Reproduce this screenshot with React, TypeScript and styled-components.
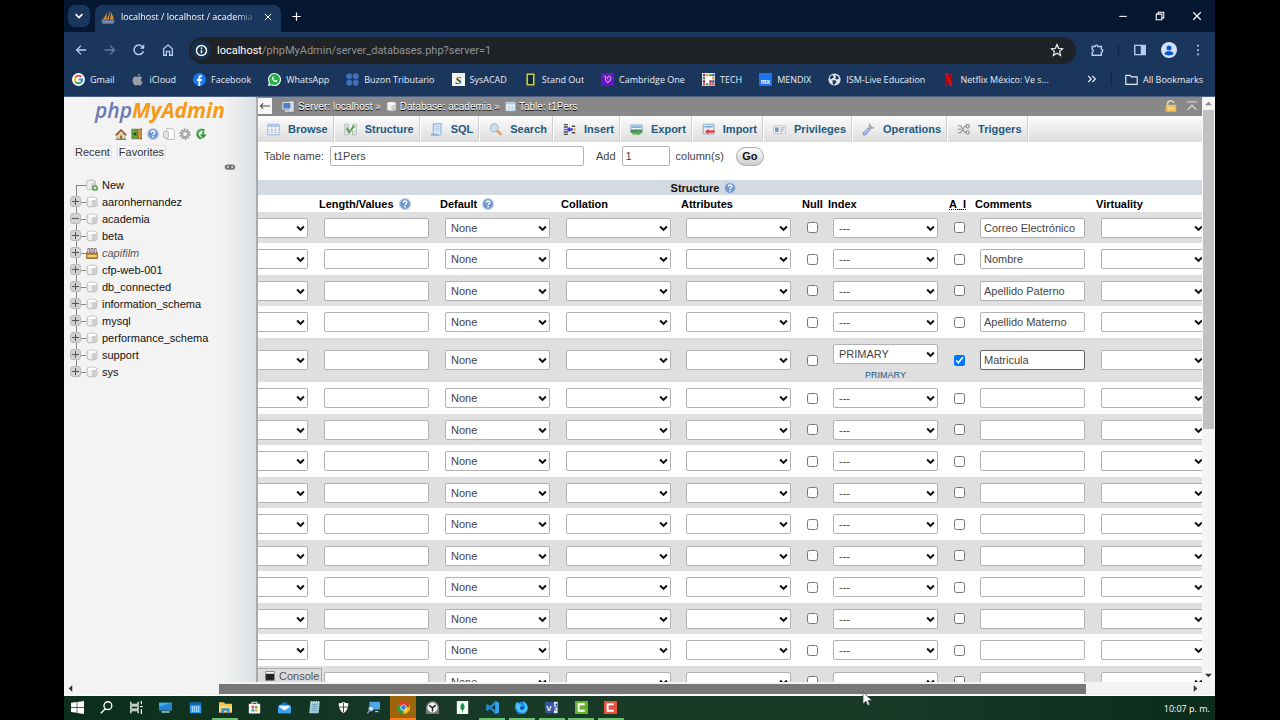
import React from "react";
import styled, { createGlobalStyle, css } from "styled-components";

const ui = '"Open Sans", "Noto Sans", sans-serif';
const sans = '"Liberation Sans", Arial, sans-serif';

const GlobalStyle = createGlobalStyle`
  *, *::before, *::after { box-sizing: border-box; }
  body { margin: 0; background: #000; font-family: ${sans}; }
  button, input, select { font: inherit; margin: 0; }
  button { padding: 0; border: 0; background: none; color: inherit; }
  a { color: inherit; text-decoration: none; }
  svg { display: block; flex: none; }
`;

/* ---------- icons ---------- */

const glyphs = {
  back: <path d="M14 8H3M8 3 3 8l5 5" fill="none" stroke="currentColor" strokeWidth="1.6" />,
  forward: <path d="M2 8h11M8 3l5 5-5 5" fill="none" stroke="currentColor" strokeWidth="1.6" />,
  reload: (
    <>
      <path d="M13 9.5A5.5 5.5 0 1 1 12 4.2" fill="none" stroke="currentColor" strokeWidth="1.7" />
      <path d="M14 1.5v5H9z" fill="currentColor" />
    </>
  ),
  home: <path d="M3 6.6 8 2.3l5 4.3V14H9.8V9.5H6.2V14H3z" fill="none" stroke="currentColor" strokeWidth="1.5" />,
  info: (
    <>
      <circle cx="8" cy="8" r="6.2" fill="none" stroke="currentColor" strokeWidth="1.8" />
      <path d="M7.1 7h1.8v4.5H7.1zM7.1 4.3h1.8V6H7.1z" fill="currentColor" />
    </>
  ),
  star: <path d="m8 1.8 1.9 4.3 4.6.4-3.5 3 1.1 4.6L8 11.6l-4.1 2.5L5 9.5l-3.5-3 4.6-.4z" fill="none" stroke="currentColor" strokeWidth="1.4" />,
  puzzle: <path d="M2.5 4h3.2a1.6 1.6 0 0 1 3.2 0H13v3.3a1.6 1.6 0 0 1 0 3.2V14H2.5v-3.4a1.7 1.7 0 0 0 0-3.3z" fill="none" stroke="currentColor" strokeWidth="1.6" />,
  panel: (
    <>
      <path d="M2 2.7h12v10.6H2z" fill="none" stroke="currentColor" strokeWidth="1.6" />
      <path d="M8.8 3h5v10h-5z" fill="currentColor" />
    </>
  ),
  avatar: (
    <>
      <circle cx="8" cy="8" r="8" fill="#d3e3fd" />
      <circle cx="8" cy="5.9" r="2.5" fill="#0b57d0" />
      <path d="M3.3 11.8C4.2 9.8 6 9.3 8 9.3s3.800.5 4.700 2.500C11.500 13 9.900 13.500 8 13.500s-3.500-.5-4.700-1.700z" fill="#0b57d0" />
    </>
  ),
  dots: <path d="M7 2h2v2H7zM7 7h2v2H7zM7 12h2v2H7z" fill="currentColor" />,
  down: <path d="m3.500 5.500 4.500 4.500 4.500-4.500" fill="none" stroke="currentColor" strokeWidth="2.200" />,
  caret: <path d="m2 4.500 6 6 6-6" fill="none" stroke="currentColor" strokeWidth="3.600" />,
  close: <path d="m3 3 10 10M13 3 3 13" fill="none" stroke="currentColor" strokeWidth="1.600" />,
  plus: <path d="M8 2v12M2 8h12" fill="none" stroke="currentColor" strokeWidth="1.800" />,
  minimize: <path d="M3 8.500h10" fill="none" stroke="currentColor" strokeWidth="1.400" />,
  restore: <path d="M3 5.500h7.500V13H3zM5.500 5.500V3H13v7.500h-2.500" fill="none" stroke="currentColor" strokeWidth="1.400" />,
  chevrons: <path d="m3 4 4 4-4 4M8.500 4l4 4-4 4" fill="none" stroke="currentColor" strokeWidth="1.500" />,
  folder: <path d="M1 3h5.200l1.600 1.800H15V14H1z" fill="none" stroke="currentColor" strokeWidth="1.400" strokeLinejoin="round" />,
  sail: (
    <>
      <path d="M6.500 2v9H1.500C3.800 8.500 5.800 6 6.500 2z" fill="#e08a1c" />
      <path d="M9.500 0c.6 4 .2 8-1 11h-1.800C8.500 8 9.500 4 9.500 0z" fill="#f7a72c" />
      <path d="M11 2c2 3 3.500 6 3.500 9H10c1-3 1.300-6 1-9z" fill="#d98a2a" />
      <path d="M0 12h16l-2 2.500H2z" fill="#8d97b8" />
      <path d="M1 15.300h14" stroke="#6c78af" />
    </>
  ),
  google: (
    <>
      <circle cx="8" cy="8" r="8" fill="#fff" />
      <g fill="none" strokeWidth="2.400">
        <path d="M11.500 4.700A4.700 4.700 0 0 0 4 5.600" stroke="#ea4335" />
        <path d="M4 5.600a4.700 4.700 0 0 0 0 4.800" stroke="#fbbc05" />
        <path d="M4 10.400a4.700 4.700 0 0 0 7.200 1" stroke="#34a853" />
        <path d="M11.200 11.400A4.700 4.700 0 0 0 12.700 8H8.200" stroke="#4285f4" />
      </g>
    </>
  ),
  apple: (
    <path
      d="M11 1c.1 1.500-1.200 3-2.700 3C8.200 2.500 9.500 1.200 11 1zM8.300 5c.8 0 1.600-.7 2.800-.7 1 0 2 .5 2.700 1.400-2.400 1.400-2 4.700.4 5.700-.6 1.800-2 4-3.300 4-.9 0-1.400-.6-2.500-.6s-1.600.6-2.500.6C3.800 15.400 2 11.900 2 9.200c0-3 1.900-4.800 3.800-4.800 1 0 1.900.6 2.500.6z"
      fill="#9a9fa6"
    />
  ),
  facebook: (
    <>
      <circle cx="8" cy="8" r="8" fill="#1877f2" />
      <path d="M6.700 16V9.900H4.800V7.500h1.900V5.800c0-2 1.200-3 2.900-3l1.600.1V5h-1c-1 0-1.200.5-1.200 1.200v1.300h2.100l-.3 2.400H9V16z" fill="#fff" />
    </>
  ),
  whatsapp: (
    <>
      <path d="M8 0a8 8 0 1 1-3.600 15.100L0 16l1-4.200A8 8 0 0 1 8 0z" fill="#fff" />
      <path d="M8 1.300a6.700 6.700 0 1 1-3.400 12.500l-2.800.7.700-2.700A6.700 6.700 0 0 1 8 1.300z" fill="#25b048" />
      <path d="M5.500 4.500c.7-.5 1.200 0 1.600 1.500l-.6.9c.5 1.200 1.400 2 2.600 2.500l.8-.8c1.700.6 2 1 1.500 1.900-2.500 2.800-8.200-3.200-5.900-6z" fill="#fff" />
    </>
  ),
  buzon: (
    <g fill="#3f6fb8">
      <circle cx="4" cy="4" r="3.600" />
      <circle cx="12" cy="4" r="3.600" />
      <circle cx="4" cy="12" r="3.600" />
      <circle cx="12" cy="12" r="3.600" />
    </g>
  ),
  sysacad: (
    <>
      <path d="M0 0h16v16H0z" fill="#f4f6ee" />
      <text x="8" y="13" textAnchor="middle" fontFamily="Liberation Serif, serif" fontStyle="italic" fontWeight="bold" fontSize="14" fill="#3a4636">S</text>
    </>
  ),
  standout: <path d="M4 1.500h8v13H4z" fill="#10233d" stroke="#c6cc3a" strokeWidth="2" />,
  cambridge: (
    <>
      <path d="M0 0h16v16H0z" fill="#6a12c9" />
      <path d="M3.500 4h2v4.500L8 12l4-3.500V5L9.500 3.800 7.500 6l1.600 1.700" fill="none" stroke="#d59bd8" strokeWidth="1.300" />
    </>
  ),
  tech: (
    <>
      <path d="M0 0h16v16H0z" fill="#fff" />
      <path d="M1 1h3v3H1zM9 9h3v3H9zM1 9h3v3H1z" fill="#8c2f4f" />
      <path d="M5 1h3v3H5zM12.500 5h3v3h-3z" fill="#e0a03a" />
      <path d="M9 1h3v3H9zM1 5h3v3H1zM5 12.500h3v3H5z" fill="#5c8f4e" />
      <path d="M12.500 1h3v3h-3zM12.500 9h3v3h-3z" fill="#3c5a9a" />
      <path d="M9 12.500h3v3H9zM1 12.500h3v3H1zM12.500 12.500h3v3h-3z" fill="#c84b3b" />
    </>
  ),
  mendix: (
    <>
      <path d="M0 0h16v16H0z" fill="#1a73f0" />
      <text x="8" y="13" textAnchor="middle" fontFamily="Liberation Sans, sans-serif" fontWeight="bold" fontSize="8" fill="#fff">mx</text>
    </>
  ),
  globe: (
    <>
      <circle cx="8" cy="8" r="7.500" fill="#dfe3ea" />
      <path d="M4 3c2-.5 3 .5 3 1.800 0 1.500-2 1.200-2.400 2.700L2 7.200C2.100 5.500 2.800 4 4 3zM9 2.200l3.500 2L13.500 7l-3 1-2-1.500L10 5zM5.500 9H9l1.500 2-2.500 3.200H6z" fill="#1b365d" />
    </>
  ),
  netflix: (
    <>
      <path d="M4 0h3v16H4zM9.500 0h3v16h-3z" fill="#b00710" />
      <path d="M4 0h3l5.500 16h-3z" fill="#e50914" />
    </>
  ),
  houseColor: (
    <>
      <path d="M3 8h10v7H3z" fill="#e9e2c9" stroke="#8a7d55" strokeWidth=".8" />
      <path d="M6.500 10h3v5h-3z" fill="#a9692d" />
      <path d="M.5 9 8 1.800 15.500 9l-1.200 1L8 4.200 1.700 10z" fill="#b5562a" stroke="#6b4a26" strokeWidth=".6" />
      <path d="M1 15h14" stroke="#4f9a3c" strokeWidth="1.600" />
    </>
  ),
  exit: (
    <>
      <path d="M1 1.500h9v13H1z" fill="#67a03f" stroke="#4a6b35" strokeWidth=".8" />
      <path d="M9 3l5-2.500v15L9 13z" fill="#cf9343" stroke="#7b5220" strokeWidth=".8" />
      <path d="M7 5.500v5L2 8z" fill="#234d1c" />
    </>
  ),
  help: (
    <>
      <circle cx="8" cy="8" r="7.300" fill="#6d97cf" stroke="#c3cfdf" strokeWidth="1.600" />
      <path d="M5.600 6.200C5.700 3.300 10.500 3.400 10.400 6c0 1.600-2.300 1.700-2.300 3.700M8.100 10.800v1.900" fill="none" stroke="#fff" strokeWidth="1.900" />
    </>
  ),
  doc: (
    <>
      <path d="M5 .8h7.500L15.500 4v11.200H5z" fill="#fff" stroke="#a9a9a9" />
      <path d="M.8 5.500c0-1.500 6.400-1.500 6.400 0v7c0 1.500-6.400 1.500-6.400 0z" fill="#e4e4e4" stroke="#9f9f9f" strokeWidth=".9" />
    </>
  ),
  gear: (
    <>
      <circle cx="8" cy="8" r="6.300" fill="none" stroke="#9a9a9a" strokeWidth="2.600" strokeDasharray="2.300 1.600" />
      <circle cx="8" cy="8" r="4" fill="none" stroke="#a8a8a8" strokeWidth="3" />
      <circle cx="8" cy="8" r="2.200" fill="#f5f5f5" />
    </>
  ),
  refreshGreen: (
    <>
      <path d="M12.500 4A5.500 5.500 0 1 0 9 13.500" fill="none" stroke="#3f9c46" strokeWidth="3.200" />
      <path d="M6.500 8.500H15.500L11 13.500z" fill="#2e8436" />
      <path d="M11 5v5" stroke="#3f9c46" strokeWidth="2.600" />
      <path d="M4 7a4.500 4.500 0 0 1 6-3.500" fill="none" stroke="#8fd08a" strokeWidth="1" />
    </>
  ),
  chain: (
    <>
      <rect x="1" y="4.500" width="14" height="7" rx="3.500" fill="#777" />
      <path d="M4 8h3M9 8h3" stroke="#eee" strokeWidth="1.800" />
      <path d="M6 8h4" stroke="#444" strokeWidth="1.200" />
    </>
  ),
  db: (
    <>
      <path d="M1.500 3.500C1.500.8 14.500.8 14.500 3.500v9c0 2.700-13 2.700-13 0z" fill="#efefef" stroke="#a4a4a4" />
      <path d="M8 5.500c3.500 0 5.500-.6 6-1.500v8.500c-.5 1-3 1.500-6 1.500z" fill="#cfcfcf" />
      <ellipse cx="8" cy="3.600" rx="5.800" ry="1.700" fill="#fff" />
    </>
  ),
  dbNew: (
    <>
      <path d="M1 3.500C1 .8 12.500.8 12.500 3.500v9c0 2.200-11.500 2.200-11.500 0z" fill="#efefef" stroke="#a4a4a4" />
      <path d="M7 5.500c3 0 4.800-.6 5.200-1.500v8C11.700 13 9.500 13.500 7 13.500z" fill="#cfcfcf" />
      <circle cx="12" cy="12" r="3.800" fill="#4c9a3c" />
      <path d="M12 10v4M10 12h4" stroke="#fff" strokeWidth="1.500" />
    </>
  ),
  group: (
    <>
      <path d="M1 7h14l1 4-1 4.500H1L0 11z" fill="#c8902c" stroke="#6d4a12" strokeWidth=".8" />
      <path d="M2 12h12" stroke="#ffe29a" strokeWidth="2" />
      <path d="M2.500 2H5v7H2.500zM6.700 2h2.500v7H6.700zM11 2h2.500v7H11z" fill="#f3eef6" stroke="#5a4450" strokeWidth=".9" />
    </>
  ),
  server: (
    <>
      <path d="M8 1h7v14H8z" fill="#d8dde4" stroke="#5c6674" strokeWidth=".8" />
      <path d="M1 3h10v8H1z" fill="#4b7fc4" stroke="#dfe6ee" strokeWidth="1.200" />
      <path d="M3.500 13.500h5" stroke="#dfe6ee" strokeWidth="1.800" />
    </>
  ),
  table: (
    <>
      <path d="M1 1.500h14v13H1z" fill="#fff" stroke="#8fb0d4" strokeWidth="1.200" />
      <path d="M1.500 2h13v3h-13z" fill="#a9c7e6" />
      <path d="M2 8.500h12M2 11.500h12M6 5v9M10.500 5v9" stroke="#a9c1da" strokeWidth="1" />
    </>
  ),
  structure: (
    <>
      <path d="M1 1.500h4.500v13H1zM10.500 1.500H15v13h-4.500z" fill="#f2f2f2" stroke="#9db0a4" />
      <path d="M2 5h2.500M2 8h2.500M2 11h2.500M11.500 5H14M11.500 11H14" stroke="#8aa" />
      <path d="M3.500 6.500 6.500 11.500 12.500 3.500" fill="none" stroke="#4a9d44" strokeWidth="2" />
    </>
  ),
  sql: (
    <>
      <path d="M4 1h10.500c-1.500 1-1 3-1 5v7c0 1.500-1 2-2 2H2c1.500-1 2-2 2-4z" fill="#d9eaf8" stroke="#6f9cc8" />
      <path d="M6 4.500h5.500M6 7h5.500M6 9.500h5.500" stroke="#9dbfe0" />
      <path d="M1 13h8.500c0 1.300.8 2 1.800 2H2.500C1.500 15 1 14 1 13z" fill="#8fb5dc" />
    </>
  ),
  search: (
    <>
      <circle cx="6.500" cy="6" r="4.800" fill="#c9dff3" stroke="#a9b9c8" strokeWidth="1.500" />
      <path d="m10.200 9.800 4 4" stroke="#e0a060" strokeWidth="3" strokeLinecap="round" />
    </>
  ),
  insert: (
    <>
      <path d="M1 2h5M1 5h5M1 11h5M1 14h5" stroke="#454545" strokeWidth="1.800" />
      <path d="M8.500 4.500v2H12v3H8.500v2L4 8z" fill="#3e3bd0" />
      <path d="M1 8h4" stroke="#6a5ae0" strokeWidth="1.800" />
      <path d="M11 4h4M11 12h4" stroke="#454545" strokeWidth="1.800" />
      <path d="M13 8h2.500" stroke="#e0b53e" strokeWidth="3" />
    </>
  ),
  exportIcon: (
    <>
      <path d="M1 2.500h14v9H1z" fill="#e7f0f7" stroke="#7e9bb5" />
      <path d="M2 5h12" stroke="#6fa8d8" strokeWidth="2" />
      <path d="M1 8h14v4H1z" fill="#4f8f5a" />
      <path d="M3 11h7V9.500l4 3-4 3V14H3z" fill="#4fb04a" />
    </>
  ),
  importIcon: (
    <>
      <path d="M1.500 1.500h13v12h-13z" fill="#e7f0f7" stroke="#7e9bb5" />
      <path d="M3 4.500h10" stroke="#6fa8d8" strokeWidth="2" />
      <path d="M15.500 9H8V7l-4.500 3.500L8 14v-2h7.500z" fill="#d6434a" />
    </>
  ),
  privileges: (
    <>
      <path d="M.8 3.500h14.400v9.500H.8z" fill="#f2f4f6" stroke="#b3bcc6" />
      <path d="M2.500 5.500H7v5.500H2.500z" fill="#7d97b4" />
      <path d="M9 6h4.500M9 8.300h4.500M9 10.500h3" stroke="#8c99a8" />
    </>
  ),
  wrench: (
    <>
      <path d="M8.500 7.500 12 4" stroke="#b4b6bc" strokeWidth="2.800" />
      <path d="M10.500 1.200c-1.500 1-1.500 3-.5 4s3 1.200 4.500-.2" fill="none" stroke="#a7a9b0" strokeWidth="2.200" />
      <path d="M3 13 8 8" stroke="#7f9fdc" strokeWidth="4.600" strokeLinecap="round" />
      <path d="M3 12.500 7.500 8" stroke="#bcd0f5" strokeWidth="1.600" strokeLinecap="round" />
    </>
  ),
  triggers: (
    <g fill="none" stroke="#8e8e8e" strokeWidth="1.300">
      <path d="M1 3.500h3.500l5 8H12M1 12h3.500l5-8H12M1 7.700h4" />
      <rect x="11" y="2" width="4" height="4" rx="1.500" />
      <rect x="11" y="9.500" width="4" height="4" rx="1.500" />
    </g>
  ),
  lock: (
    <>
      <path d="M3.500 8V4.500C3.500.3 11.500.3 11.500 4" fill="none" stroke="#e2dccb" strokeWidth="1.800" />
      <path d="M1.500 7h13v8h-13z" fill="#efbd4f" stroke="#f5d27a" strokeWidth=".8" />
      <path d="M5 9v4M8 9v4M11 9v4" stroke="#fff0c0" strokeWidth="1.200" />
    </>
  ),
  top: <path d="M1.500 2.500h13M2.500 13 8 7l5.500 6" fill="none" stroke="#d2d2d2" strokeWidth="1.900" />,
  arrowLeft: <path d="M14.500 8H2M5.500 4.500 2 8l3.500 3.500" fill="none" stroke="#444" strokeWidth="1.400" />,
  consoleIcon: (
    <>
      <path d="M1 1h14v14H1z" fill="#222" stroke="#777" />
      <path d="M1.500 1.500h13v3h-13z" fill="#f4f4f4" />
    </>
  ),
  windows: <path d="M0 2.300 7 1.300v6.200H0zM7.800 1.200 16 0v7.500H7.800zM0 8.300h7v6.200l-7-1zM7.800 8.300H16V16l-8.200-1.200z" fill="#fff" />,
  find: <path d="M6.800 9.300 1 15M14.500 5.700a4.800 4.800 0 1 1-9.600 0 4.800 4.800 0 0 1 9.600 0z" fill="none" stroke="#fff" strokeWidth="1.700" />,
  taskView: <path d="M1 1v3h9V1M1 15v-3h9v3M1 6h9v4H1zM14 0v4M14 10v6M12.500 7h3" fill="none" stroke="#fff" strokeWidth="1.500" />,
  monitor: (
    <>
      <path d="M0 2h16v9.500H0z" fill="#45aef2" />
      <path d="M0 7 16 2v9.500H0z" fill="#1f83d6" />
      <path d="M3 13.500h10" stroke="#cfe3f3" strokeWidth="1.600" />
    </>
  ),
  calendar: (
    <>
      <path d="M1 2h14v13H1z" fill="#2f9bea" />
      <path d="M1 2h14v3H1z" fill="#0f62b4" />
      <path d="M3.500 7.500h9M3.500 10h9M3.500 12.500h9" stroke="#e8f5ff" strokeWidth="1.400" strokeDasharray="1.500 1" />
    </>
  ),
  explorer: (
    <>
      <path d="M0 1.500h6l1.500 2H16V14H0z" fill="#f3c44b" />
      <path d="M0 6h16v8H0z" fill="#ffd972" />
      <path d="M3 15V9h10v6h-3v-3H6v3z" fill="#3c8fd0" />
    </>
  ),
  store: (
    <>
      <path d="M5 4V1.500h6V4" fill="none" stroke="#dfe8e6" strokeWidth="1.300" />
      <path d="M1 3.500h14V14q0 1.500-1.500 1.500h-11Q1 15.500 1 14z" fill="#f5f5f5" />
      <path d="M4.500 6h3v3h-3z" fill="#e8532c" />
      <path d="M8.500 6h3v3h-3z" fill="#6cb33e" />
      <path d="M4.500 10h3v3h-3z" fill="#2a9be0" />
      <path d="M8.500 10h3v3h-3z" fill="#f5b51e" />
    </>
  ),
  mail: (
    <>
      <path d="m0 6 8-5 8 5v9H0z" fill="#1272c4" />
      <path d="M1.500 5.500h13V9L8 12 1.500 9z" fill="#e9f4fc" />
      <path d="m0 6.500 8 5.500 8-5.500V15H0z" fill="#3aa4ee" />
    </>
  ),
  notes: (
    <>
      <path d="M3 1h11.500L13 15H1.500z" fill="#a5cfe0" />
      <path d="M5 4h7M4.800 6.500h7M4.500 9h7M4.200 11.500h7" stroke="#5d8fa6" strokeWidth=".9" />
      <path d="M3.500.8h11" stroke="#eef" strokeWidth="1.800" strokeDasharray="1.200 1" />
    </>
  ),
  shield: (
    <>
      <path d="M8 1c2 1.300 4 1.800 6 1.800 0 6-2 10-6 12.200C4 12.800 2 8.800 2 2.800 4 2.800 6 2.300 8 1z" fill="#fff" />
      <path d="M8 2v12M2.500 7.500h11" stroke="#12321f" strokeWidth="1" />
    </>
  ),
  remote: (
    <>
      <path d="M3 1h13v9.500H3z" fill="#4aa7ea" />
      <path d="M10 13h4" stroke="#b8d4e8" strokeWidth="1.500" />
      <circle cx="5" cy="9.500" r="3" fill="#cfe6f6" stroke="#5b88a8" />
      <path d="m3 12-2.500 3" stroke="#9fb6c6" strokeWidth="1.600" />
    </>
  ),
  chrome: (
    <>
      <path d="M8 8 1.100 4A8 8 0 0 1 14.900 4z" fill="#e33b2e" />
      <path d="M8 8 1.100 4A8 8 0 0 0 8 16z" fill="#2c9f4b" />
      <path d="M8 8h6.900L14.900 4A8 8 0 0 1 8 16z" fill="#fbc116" />
      <circle cx="8" cy="8" r="3.800" fill="#fff" />
      <circle cx="8" cy="8" r="3" fill="#3d7de8" />
    </>
  ),
  clock: (
    <>
      <path d="M0 8a8 8 0 0 1 16 0v8H0z" fill="#777a7a" />
      <circle cx="8" cy="8" r="6.300" fill="#f3f3f3" />
      <path d="m4 5.500 4 2.800 4-3.300M8 8v5" fill="none" stroke="#222" strokeWidth="1.800" />
    </>
  ),
  mongo: (
    <>
      <path d="M1 0h14v16H1z" fill="#f5fbf5" />
      <path d="M8 2c4 4 3 7.500 0 10C5 9.500 4 6 8 2zM7.600 11h.8v3h-.8z" fill="#19934a" />
    </>
  ),
  vscode: (
    <>
      <path d="m11.500 0 4.500 2v12l-4.500 2L5 9.800 1.800 12.300.2 11.400V4.600l1.600-.9L5 6.200z" fill="#2489ca" />
      <path d="M11.500 4.500v7L7 8z" fill="#143622" />
      <path d="M11.500 0 16 2v12l-4.500 2z" fill="#35a4ee" />
    </>
  ),
  firefox: (
    <>
      <circle cx="8" cy="8.500" r="7.500" fill="#1f86e6" />
      <path d="M1.500 1.500C3 2 4.500 2.500 5.500 4.200L9 5c0 2-2.800 1.500-3 4 .5 3 5 3 6 0C13 6 11 3 9.500 0 14 2 16 6 15.500 9a7.500 7.500 0 0 1-15-.5C.5 6 .8 3.500 1.500 1.500z" fill="#45c5f2" />
      <path d="M1 7c.5 5 5 8 9 7.500 3-.5 5-3 5.400-5.500-.4 4-3.400 7-7.400 7S.5 13 .5 8.500z" fill="#1f6fe0" />
      <circle cx="8.500" cy="8.500" r="2.200" fill="#1350b8" />
    </>
  ),
  visio: (
    <>
      <path d="M0 1h11v14H0z" fill="#3955a3" />
      <path d="M11 1h4.500v14H11z" fill="#e6ecfa" />
      <text x="5" y="12" textAnchor="middle" fontFamily="Liberation Sans, sans-serif" fontWeight="bold" fontSize="10" fill="#fff">V</text>
      <path d="M12 4h2.500v3.500H12V11h2" fill="none" stroke="#3955a3" strokeWidth="1.300" />
    </>
  ),
  camtasia: (
    <>
      <path d="M0 0h16v16H0z" fill="#69b42d" />
      <path d="M12 4H4.500v8H12" fill="none" stroke="#fff" strokeWidth="2.400" />
    </>
  ),
  recorder: (
    <>
      <path d="M0 0h16v16H0z" fill="#e8533f" />
      <path d="M12 4H4.500v8H12" fill="none" stroke="#fff" strokeWidth="2.400" />
    </>
  ),
};

type GlyphName = keyof typeof glyphs;

function Icon({ name, size = 12 }: { name: GlyphName; size?: number }) {
  return (
    <svg width={size} height={size} viewBox="0 0 16 16" aria-hidden="true">
      {glyphs[name]}
    </svg>
  );
}

/* ---------- browser frame ---------- */

const Desktop = styled.div`
  position: relative;
  display: flex;
  flex-direction: column;
  height: 100vh;
  margin: 0 65px 0 64px;
  overflow: hidden;
`;

const TabStrip = styled.div`
  display: flex;
  align-items: flex-end;
  height: 32px;
  flex: none;
  background: #061831;
  color: #fff;
  font-family: ${ui};
`;

const TabSearch = styled.button`
  display: grid;
  place-items: center;
  width: 22px;
  height: 22px;
  margin: 0 5px 5px 4px;
  border-radius: 7px;
  background: #1b365d;
`;

const BrowserTab = styled.div`
  display: flex;
  align-items: center;
  width: 186px;
  height: 27px;
  padding: 0 6px 4px 6px;
  border-radius: 8px 8px 0 0;
  background: #1b365d;
`;

const TabTitle = styled.span`
  flex: 1;
  margin: 0 4px 0 6px;
  white-space: nowrap;
  font-size: 9px;
  font-weight: 500;
  mask-image: linear-gradient(to right, #000 84%, transparent);
`;

const StripButton = styled.button`
  display: grid;
  place-items: center;
  width: 14px;
  height: 14px;
`;

const NewTab = styled(StripButton)`
  margin: 0 auto 9px 8px;
`;

const WindowControls = styled.div`
  display: flex;
  gap: 23px;
  padding: 0 11px 9px 0;
`;

const Toolbar = styled.div`
  display: flex;
  align-items: center;
  height: 36px;
  flex: none;
  padding: 0 10px;
  background: #1b365d;
  color: #b5cdf2;
`;

const ToolButtons = styled.div<{ $gap: number }>`
  display: flex;
  align-items: center;
  gap: ${(p) => p.$gap}px;
`;

const ToolButton = styled.button<{ $dim?: boolean }>`
  display: grid;
  place-items: center;
  opacity: ${(p) => (p.$dim ? 0.45 : 1)};
`;

const AddressBar = styled.div`
  display: flex;
  flex: 1;
  align-items: center;
  height: 27px;
  margin: 0 14px;
  padding: 0 12px 0 2px;
  border-radius: 14px;
  background: #1f2226;
  color: #e3e6ea;
`;

const SiteInfo = styled.button`
  display: grid;
  place-items: center;
  width: 20px;
  height: 20px;
  margin-right: 6px;
  border-radius: 50%;
  background: #16304f;
  color: #fff;
`;

const Address = styled.span`
  flex: 1;
  font-family: Roboto, sans-serif;
  font-size: 11px;
  color: #8f9399;
  b { font-weight: 400; color: #fff; }
`;

const Divider = styled.span`
  width: 1px;
  height: 13px;
  background: #0e2444;
`;

const Bookmarks = styled.nav`
  display: flex;
  align-items: center;
  gap: 17px;
  height: 28px;
  flex: none;
  padding: 0 12px 6px 8px;
  background: #1b365d;
  color: #e8eef8;
  font-family: ${ui};
  font-size: 9px;
  font-weight: 500;
  white-space: nowrap;
`;

const Bookmark = styled.a`
  display: flex;
  align-items: center;
  gap: 5px;
`;

const BookmarkTail = styled.div`
  display: flex;
  align-items: center;
  gap: 13px;
  margin-left: auto;
`;

/* ---------- page ---------- */

const Page = styled.div`
  display: flex;
  flex: 1;
  min-height: 0;
  border-top: 1px solid #4a5f84;
`;

const Sidebar = styled.aside`
  flex: none;
  width: 194px;
  border-right: 2px solid #a9acae;
  background: linear-gradient(to right, #f3f3f3 82%, #dce1e4);
  color: #111;
  font-size: 11px;
`;

const Logo = styled.h1`
  display: flex;
  justify-content: center;
  height: 28px;
  margin: 0;
  font-family: ${ui};
  font-size: 21px;
  line-height: 27px;
  font-weight: 700;
  font-style: italic;
  color: #f49b18;
  span { font-weight: 600; color: #6c78af; }
`;

const SidebarIcons = styled.div`
  display: flex;
  justify-content: center;
  gap: 4px;
  height: 19px;
  padding: 3px 0 0 2px;
`;

const SidebarTabs = styled.div`
  display: flex;
  gap: 5px;
  padding: 1px 0 0 9px;
`;

const SidebarTab = styled.button`
  height: 14px;
  padding: 0 1px;
  border: 1px solid #e2e4e8;
  border-radius: 2px;
  line-height: 12px;
  color: #333;
`;

const LinkRow = styled.div`
  display: flex;
  justify-content: flex-end;
  padding: 2px 20px 3px 0;
`;

const Tree = styled.ul`
  margin: 0;
  padding: 0 0 0 6px;
  list-style: none;
`;

const TreeRow = styled.li<{ $first?: boolean; $last?: boolean }>`
  position: relative;
  display: flex;
  align-items: center;
  height: 17px;
  &::before {
    content: "";
    position: absolute;
    left: 6px;
    top: ${(p) => (p.$first ? "9px" : "0")};
    bottom: ${(p) => (p.$last ? "8px" : "0")};
    border-left: 1px solid #888;
  }
  &::after {
    content: "";
    position: absolute;
    left: 6px;
    top: 9px;
    width: 10px;
    border-top: 1px solid #888;
  }
`;

const Expander = styled.button<{ $open?: boolean }>`
  position: relative;
  z-index: 1;
  width: 11px;
  height: 11px;
  border-radius: 3px;
  border: 1px solid #bbb;
  background:
    linear-gradient(#555, #555) center / 7px 1px no-repeat,
    linear-gradient(#555, #555) center / 1px ${(p) => (p.$open ? "1px" : "7px")} no-repeat,
    #d2d2d2;
`;

const ExpanderGap = styled.span`
  width: 11px;
`;

const TreeLink = styled.a<{ $group?: boolean }>`
  display: flex;
  align-items: center;
  gap: 4px;
  margin-left: 5px;
  ${(p) => p.$group && css`font-style: italic; color: #555;`}
`;

const Main = styled.main`
  position: relative;
  flex: 1;
  min-width: 0;
  overflow: hidden;
  background: #fff;
  color: #444;
  font-size: 11px;
`;

const Crumbs = styled.div`
  display: flex;
  align-items: center;
  height: 19px;
  padding: 0 4px 1px 0;
  background: #888;
  color: #fff;
  font-size: 10px;
  text-shadow: 0 1px 0 #000;
`;

const CollapseNav = styled.button`
  display: grid;
  place-items: center;
  width: 14px;
  height: 16px;
  margin-right: 10px;
  background: #f6f6f6;
`;

const Crumb = styled.a`
  display: flex;
  align-items: center;
  gap: 3px;
  margin-right: 5px;
`;

const CrumbTools = styled.div`
  display: flex;
  gap: 9px;
  margin-left: auto;
`;

const Menu = styled.nav`
  display: flex;
  height: 26px;
  background: linear-gradient(#fdfdfd, #dcdcdc);
`;

const MenuTab = styled.a`
  display: flex;
  align-items: center;
  gap: 8px;
  padding: 0 6px 0 9px;
  border-right: 1px solid #fff;
  box-shadow: inset -1px 0 0 #d0d0d0;
  color: #235a81;
  font-weight: 700;
  white-space: nowrap;
`;

const field = css`
  height: 20px;
  border: 1px solid #b2b2b2;
  border-radius: 2px;
  background: #fff;
  color: #444;
  font-size: 11px;
`;

const TableForm = styled.form`
  display: flex;
  align-items: center;
  height: 38px;
  padding: 0 0 10px 6px;
`;

const TextField = styled.input<{ $width?: number; $active?: boolean }>`
  ${field}
  display: block;
  width: ${(p) => p.$width ?? 105}px;
  padding: 0 3px;
  border-color: ${(p) => (p.$active ? "#666" : "#b2b2b2")};
`;

const FormLabel = styled.label`
  display: flex;
  align-items: center;
  gap: 6px;
  margin-right: 12px;
  white-space: nowrap;
`;

const GoButton = styled.button`
  width: 28px;
  height: 19px;
  border: 1px solid #aaa;
  border-radius: 10px;
  background: linear-gradient(#fff, #ccc);
  color: #111;
  font-weight: 700;
`;

const Grid = styled.table`
  width: 100%;
  min-width: 959px;
  table-layout: fixed;
  border-collapse: collapse;
  td, th { padding: 0; text-align: left; white-space: nowrap; }
`;

const Caption = styled.th`
  height: 15px;
  background: #d3dae1;
  color: #111;
  && { padding-right: 68px; text-align: center; }
`;

const HeadLabel = styled.span`
  display: inline-flex;
  align-items: center;
  gap: 5px;
  vertical-align: top;
`;

const Heads = styled.tr`
  height: 17px;
  background: #fff;
  color: #000;
`;

const Row = styled.tr<{ $tall?: boolean }>`
  height: ${(p) => (p.$tall ? 44 : 31)}px;
  background: #dfdfdf;
  &:nth-child(even) { height: 32px; background: #fff; }
`;

const SelectBox = styled.div<{ $cut?: boolean }>`
  position: relative;
  width: ${(p) => (p.$cut ? 50 : 105)}px;
  color: #111;
  svg {
    position: absolute;
    right: 3px;
    top: 6px;
    pointer-events: none;
  }
  select {
    ${field}
    display: block;
    width: 100%;
    padding: 0 16px 0 5px;
    appearance: none;
    ${(p) => p.$cut && css`border-left: 0; border-radius: 0 2px 2px 0;`}
  }
`;

const Pad = styled.div<{ $low?: boolean }>`
  padding: ${(p) => (p.$low ? "4px" : "0")} 0 0 5px;
`;

const Tick = styled.input`
  display: block;
  width: 11px;
  height: 11px;
  margin: 0 0 0 5px;
`;

const IndexNote = styled.a`
  display: block;
  width: 105px;
  padding-top: 6px;
  text-align: center;
  font-size: 9px;
  line-height: 10px;
  color: #235a81;
`;

const Console = styled.button`
  position: absolute;
  left: 0;
  bottom: 0;
  display: flex;
  align-items: center;
  gap: 4px;
  height: 14px;
  padding: 0 2px 0 7px;
  border: 1px solid #aaa;
  border-width: 1px 1px 0 0;
  background: #dcdcdc;
  color: #555;
`;

/* ---------- scroll bars ---------- */

const VTrack = styled.div`
  display: flex;
  flex-direction: column;
  align-items: center;
  flex: none;
  width: 13px;
  background: #f5f5f5;
`;

const VThumb = styled.div`
  width: 11px;
  flex: 318;
  background: #c1c1c1;
`;

const HTrack = styled.div`
  display: flex;
  align-items: center;
  flex: none;
  height: 14px;
  padding-right: 13px;
  border-bottom: 1px solid #fff;
  background: #f3f3f3;
`;

const HThumb = styled.div`
  height: 10px;
  flex: 867;
  background: #777;
`;

const TrackSpace = styled.div<{ $grow: number }>`
  flex: ${(p) => p.$grow};
`;

const ScrollButton = styled.button`
  display: grid;
  place-items: center;
  width: 13px;
  height: 13px;
`;

function Triangle({ turn }: { turn: number }) {
  return (
    <svg width="7" height="7" viewBox="0 0 8 8" aria-hidden="true">
      <path d="M0 6h8L4 2z" fill={turn ? "#333" : "#888"} transform={`rotate(${turn} 4 4)`} />
    </svg>
  );
}

/* ---------- task bar ---------- */

const TaskBar = styled.footer`
  display: flex;
  align-items: center;
  justify-content: space-between;
  flex: none;
  height: 24px;
  padding-right: 5px;
  background: linear-gradient(to right, #0b2f1c, #1a3a28 40%, #1a3a28 70%, #0b2c1b);
  color: #fff;
  font-family: ${ui};
  font-size: 9px;
`;

const Tasks = styled.div`
  display: flex;
  justify-content: space-between;
  flex: 0 1 560px;
`;

const Task = styled.button<{ $open?: boolean; $active?: boolean }>`
  display: grid;
  place-items: center;
  width: 26px;
  height: 24px;
  border-bottom: 2px solid transparent;
  ${(p) => p.$open && css`border-image: linear-gradient(to right, transparent 8%, #6cc070 8%, #6cc070 92%, transparent 92%) 2;`}
  ${(p) => p.$active && css`background: #9c650c; border-bottom-color: #ff7a1a;`}
`;

const Cursor = styled.svg`
  position: absolute;
  left: 798px;
  top: 691px;
`;

/* ---------- data ---------- */

const bookmarks: [GlyphName, string][] = [
  ["google", "Gmail"],
  ["apple", "iCloud"],
  ["facebook", "Facebook"],
  ["whatsapp", "WhatsApp"],
  ["buzon", "Buzon Tributario"],
  ["sysacad", "SysACAD"],
  ["standout", "Stand Out"],
  ["cambridge", "Cambridge One"],
  ["tech", "TECH"],
  ["mendix", "MENDIX"],
  ["globe", "ISM-Live Education"],
  ["netflix", "Netflix México: Ve s..."],
];

const databases = [
  "New", "aaronhernandez", "academia", "beta", "capifilm", "cfp-web-001", "db_connected",
  "information_schema", "mysql", "performance_schema", "support", "sys",
];

const menu: [GlyphName, string][] = [
  ["table", "Browse"],
  ["structure", "Structure"],
  ["sql", "SQL"],
  ["search", "Search"],
  ["insert", "Insert"],
  ["exportIcon", "Export"],
  ["importIcon", "Import"],
  ["privileges", "Privileges"],
  ["wrench", "Operations"],
  ["triggers", "Triggers"],
];

const comments = ["Correo Electrónico", "Nombre", "Apellido Paterno", "Apellido Materno", "Matricula"];
const rows = Array.from({ length: 15 }, (_, i) => ({ comment: comments[i] ?? "", primary: i === 4 }));
const columns = [61, 121, 121, 120, 121, 26, 121, 26, 121, 121];

const tasks: { icon: GlyphName; open?: boolean; active?: boolean }[] = [
  { icon: "windows" }, { icon: "find" }, { icon: "taskView" }, { icon: "monitor" }, { icon: "calendar" },
  { icon: "explorer", open: true }, { icon: "store" }, { icon: "mail" }, { icon: "notes" }, { icon: "shield" },
  { icon: "remote" }, { icon: "chrome", active: true }, { icon: "clock" }, { icon: "mongo" },
  { icon: "vscode", open: true }, { icon: "firefox", open: true }, { icon: "visio", open: true },
  { icon: "camtasia", open: true }, { icon: "recorder", open: true },
];

const sidebarIcons: GlyphName[] = ["houseColor", "exit", "help", "doc", "gear", "refreshGreen"];

function Choice({ label, options = [""], cut }: { label: string; options?: string[]; cut?: boolean }) {
  return (
    <SelectBox $cut={cut}>
      <select aria-label={label}>
        {options.map((o) => <option key={o}>{o}</option>)}
      </select>
      <Icon name="caret" size={9} />
    </SelectBox>
  );
}

function ColumnRow({ comment, primary }: { comment: string; primary: boolean }) {
  return (
    <Row $tall={primary}>
      <td><Choice label="Type" cut /></td>
      <td><Pad><TextField aria-label="Length/Values" /></Pad></td>
      <td><Pad><Choice label="Default" options={["None"]} /></Pad></td>
      <td><Pad><Choice label="Collation" /></Pad></td>
      <td><Pad><Choice label="Attributes" /></Pad></td>
      <td><Tick type="checkbox" aria-label="Null" /></td>
      <td>
        <Pad $low={primary}>
          <Choice label="Index" options={[primary ? "PRIMARY" : "---"]} />
          {primary && <IndexNote href="#">PRIMARY</IndexNote>}
        </Pad>
      </td>
      <td><Tick type="checkbox" aria-label="A_I" defaultChecked={primary} /></td>
      <td><Pad><TextField aria-label="Comments" defaultValue={comment} $active={primary} /></Pad></td>
      <td><Pad><Choice label="Virtuality" /></Pad></td>
    </Row>
  );
}

const AutoInc = styled.abbr`
  text-decoration: underline dotted;
`;

export default function App() {
  return (
    <>
      <GlobalStyle />
      <Desktop>
        <TabStrip>
          <TabSearch aria-label="Search tabs"><Icon name="down" size={12} /></TabSearch>
          <BrowserTab>
            <Icon name="sail" size={14} />
            <TabTitle>localhost / localhost / academia</TabTitle>
            <StripButton aria-label="Close tab"><Icon name="close" size={10} /></StripButton>
          </BrowserTab>
          <NewTab aria-label="New tab"><Icon name="plus" size={11} /></NewTab>
          <WindowControls>
            <StripButton aria-label="Minimize"><Icon name="minimize" size={12} /></StripButton>
            <StripButton aria-label="Restore"><Icon name="restore" size={12} /></StripButton>
            <StripButton aria-label="Close"><Icon name="close" size={12} /></StripButton>
          </WindowControls>
        </TabStrip>

        <Toolbar>
          <ToolButtons $gap={15}>
            <ToolButton aria-label="Back"><Icon name="back" size={14} /></ToolButton>
            <ToolButton aria-label="Forward" $dim><Icon name="forward" size={14} /></ToolButton>
            <ToolButton aria-label="Reload"><Icon name="reload" size={14} /></ToolButton>
            <ToolButton aria-label="Home"><Icon name="home" size={14} /></ToolButton>
          </ToolButtons>
          <AddressBar>
            <SiteInfo aria-label="Site information"><Icon name="info" size={13} /></SiteInfo>
            <Address><b>localhost</b>/phpMyAdmin/server_databases.php?server=1</Address>
            <ToolButton aria-label="Bookmark this page"><Icon name="star" size={14} /></ToolButton>
          </AddressBar>
          <ToolButtons $gap={14}>
            <ToolButton aria-label="Extensions"><Icon name="puzzle" size={14} /></ToolButton>
            <Divider />
            <ToolButton aria-label="Side panel"><Icon name="panel" size={14} /></ToolButton>
            <ToolButton aria-label="Profile"><Icon name="avatar" size={16} /></ToolButton>
            <ToolButton aria-label="Menu"><Icon name="dots" size={14} /></ToolButton>
          </ToolButtons>
        </Toolbar>

        <Bookmarks>
          {bookmarks.map(([icon, label]) => (
            <Bookmark key={label} href="#"><Icon name={icon} size={13} />{label}</Bookmark>
          ))}
          <BookmarkTail>
            <ToolButton aria-label="More bookmarks"><Icon name="chevrons" size={12} /></ToolButton>
            <Divider />
            <Bookmark href="#"><Icon name="folder" size={13} />All Bookmarks</Bookmark>
          </BookmarkTail>
        </Bookmarks>

        <Page>
          <Sidebar>
            <Logo><span>php</span>MyAdmin</Logo>
            <SidebarIcons>
              {sidebarIcons.map((n) => <Icon key={n} name={n} />)}
            </SidebarIcons>
            <SidebarTabs>
              <SidebarTab>Recent</SidebarTab>
              <SidebarTab>Favorites</SidebarTab>
            </SidebarTabs>
            <LinkRow><Icon name="chain" /></LinkRow>
            <Tree>
              {databases.map((name, i) => (
                <TreeRow key={name} $first={i === 0} $last={i === databases.length - 1}>
                  {i === 0 ? <ExpanderGap /> : <Expander aria-label={`Expand ${name}`} $open={name === "academia"} />}
                  <TreeLink href="#" $group={name === "capifilm"}>
                    <Icon name={i === 0 ? "dbNew" : name === "capifilm" ? "group" : "db"} />
                    {name}
                  </TreeLink>
                </TreeRow>
              ))}
            </Tree>
          </Sidebar>

          <Main>
            <Crumbs>
              <CollapseNav aria-label="Hide navigation"><Icon name="arrowLeft" /></CollapseNav>
              <Crumb href="#"><Icon name="server" size={13} />Server: localhost »</Crumb>
              <Crumb href="#"><Icon name="db" size={11} />Database: academia »</Crumb>
              <Crumb href="#"><Icon name="table" size={11} />Table: t1Pers</Crumb>
              <CrumbTools><Icon name="lock" /><Icon name="top" /></CrumbTools>
            </Crumbs>
            <Menu>
              {menu.map(([icon, label]) => (
                <MenuTab key={label} href="#"><Icon name={icon} size={13} />{label}</MenuTab>
              ))}
            </Menu>
            <TableForm>
              <FormLabel>Table name: <TextField $width={254} defaultValue="t1Pers" /></FormLabel>
              <FormLabel>Add <TextField $width={48} defaultValue="1" /> column(s)</FormLabel>
              <GoButton type="button">Go</GoButton>
            </TableForm>
            <Grid>
              <colgroup>
                {columns.map((w, i) => <col key={i} width={w} />)}
              </colgroup>
              <thead>
                <tr><Caption colSpan={10}><HeadLabel>Structure <Icon name="help" /></HeadLabel></Caption></tr>
                <Heads>
                  <th />
                  <th><HeadLabel>Length/Values <Icon name="help" /></HeadLabel></th>
                  <th><HeadLabel>Default <Icon name="help" /></HeadLabel></th>
                  <th>Collation</th>
                  <th>Attributes</th>
                  <th>Null</th>
                  <th>Index</th>
                  <th><AutoInc title="AUTO_INCREMENT">A_I</AutoInc></th>
                  <th>Comments</th>
                  <th>Virtuality</th>
                </Heads>
              </thead>
              <tbody>
                {rows.map((r, i) => <ColumnRow key={i} {...r} />)}
              </tbody>
            </Grid>
            <Console><Icon name="consoleIcon" size={10} />Console</Console>
          </Main>

          <VTrack>
            <ScrollButton aria-label="Scroll up"><Triangle turn={0} /></ScrollButton>
            <VThumb />
            <TrackSpace $grow={240} />
            <ScrollButton aria-label="Scroll down"><Triangle turn={180} /></ScrollButton>
          </VTrack>
        </Page>

        <HTrack>
          <ScrollButton aria-label="Scroll left"><Triangle turn={270} /></ScrollButton>
          <TrackSpace $grow={142} />
          <HThumb />
          <TrackSpace $grow={103} />
          <ScrollButton aria-label="Scroll right"><Triangle turn={90} /></ScrollButton>
        </HTrack>

        <TaskBar>
          <Tasks>
            {tasks.map((t) => (
              <Task key={t.icon} aria-label={t.icon} $open={t.open} $active={t.active}>
                <Icon name={t.icon} size={13} />
              </Task>
            ))}
          </Tasks>
          <time>10:07 p. m.</time>
        </TaskBar>

        <Cursor width="11" height="16" viewBox="0 0 11 16" aria-hidden="true">
          <path d="M1 1v12l3-2.800 1.800 4.300 2-.9L6 9.500h4z" fill="#fff" stroke="#333" strokeWidth=".7" />
        </Cursor>
      </Desktop>
    </>
  );
}
